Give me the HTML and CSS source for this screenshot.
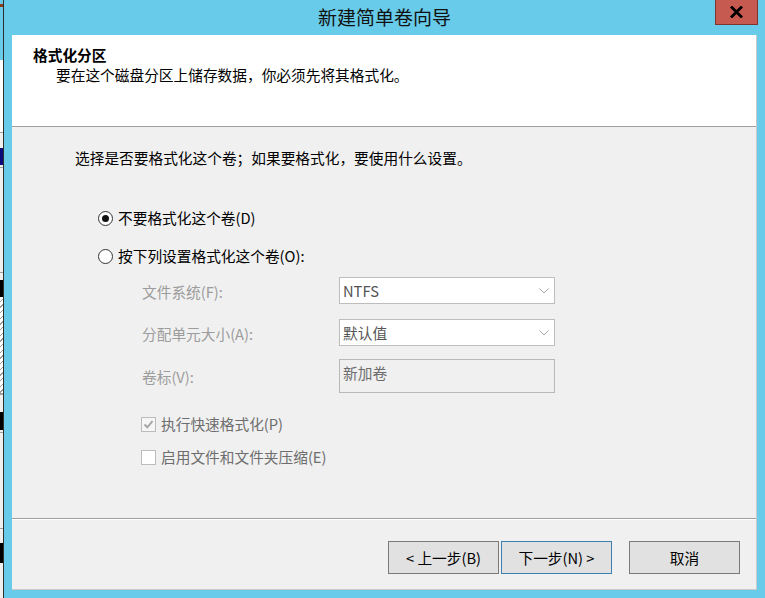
FILE: index.html
```html
<!DOCTYPE html>
<html lang="zh-CN">
<head>
<meta charset="utf-8">
<title>新建简单卷向导</title>
<link rel="stylesheet" href="styles.css">
</head>
<body>
<div class="screen">
  <div class="desk">
    <span class="d d1"></span><span class="d d2"></span><span class="d d3"></span><span class="d d4"></span>
    <span class="d d5"></span><span class="d d6"></span><span class="d d7"></span><span class="d d8"></span>
    <span class="d d9"></span><span class="d d10"></span><span class="d d11"></span><span class="d d12"></span>
    <span class="d d13"></span><span class="d d14"></span><span class="d d15"></span><span class="d d16"></span>
    <span class="d d17"></span><span class="d d18"></span><span class="d d19"></span><span class="d d20"></span>
    <span class="d d21"></span><span class="d d22"></span><span class="d d23"></span><span class="d d24"></span>
  </div>
  <div class="window">
    <div class="titlebar">
      <div class="title">新建简单卷向导</div>
      <button class="close" type="button" aria-label="关闭">
        <svg width="13" height="12" viewBox="0 0 13 12"><path d="M1 0.5 L12 11.5 M12 0.5 L1 11.5" stroke="#000" stroke-width="2.8" fill="none"/></svg>
      </button>
    </div>
    <div class="client">
      <div class="header">
        <div class="h-title">格式化分区</div>
        <div class="h-sub">要在这个磁盘分区上储存数据，你必须先将其格式化。</div>
      </div>
      <div class="body">
        <p class="intro">选择是否要格式化这个卷；如果要格式化，要使用什么设置。</p>
        <div class="radio-row first"><span class="radio checked"></span><span>不要格式化这个卷(D)</span></div>
        <div class="radio-row second"><span class="radio"></span><span>按下列设置格式化这个卷(O):</span></div>
        <div class="form">
          <div class="frow r1">
            <div class="label">文件系统(F):</div>
            <div class="select"><span>NTFS</span><svg class="chev" width="10" height="6" viewBox="0 0 10 6"><path d="M0.5 0.5 L5 5 L9.5 0.5" stroke="#a9a9a9" stroke-width="1" fill="none"/></svg></div>
          </div>
          <div class="frow r2">
            <div class="label">分配单元大小(A):</div>
            <div class="select"><span>默认值</span><svg class="chev" width="10" height="6" viewBox="0 0 10 6"><path d="M0.5 0.5 L5 5 L9.5 0.5" stroke="#a9a9a9" stroke-width="1" fill="none"/></svg></div>
          </div>
          <div class="frow r3">
            <div class="label">卷标(V):</div>
            <div class="textbox">新加卷</div>
          </div>
        </div>
        <div class="check-row c1"><span class="check checked"><svg width="13" height="13" viewBox="0 0 13 13"><path d="M2.5 6.5 L5.3 9.3 L10.5 3.2" stroke="#a6a6a6" stroke-width="2" fill="none"/></svg></span><span>执行快速格式化(P)</span></div>
        <div class="check-row c2"><span class="check"></span><span>启用文件和文件夹压缩(E)</span></div>
      </div>
      <div class="footer">
        <button class="btn" type="button">&lt; 上一步(B)</button>
        <button class="btn default" type="button">下一步(N) &gt;</button>
        <button class="btn cancel" type="button">取消</button>
      </div>
    </div>
  </div>
</div>
</body>
</html>
```
FILE: styles.css
```css
* { box-sizing: border-box; }
html, body { margin: 0; padding: 0; }
body {
  width: 765px;
  height: 598px;
  overflow: hidden;
  font-family: "Noto Sans CJK SC", "Noto Sans", sans-serif;
  font-size: 14.7px;
  line-height: 20px;
  color: #000;
}
.screen {
  display: flex;
  width: 765px;
  height: 598px;
}

/* background desktop sliver */
.desk {
  width: 3px;
  display: flex;
  flex-direction: column;
  background: #f0f0f0;
}
.d { display: block; width: 3px; flex: none; }
.d1 { height: 4px; background: #67cbe9; }
.d2 { height: 3px; background: #8b3a1a; }
.d3 { height: 53px; background: #67cbe9; }
.d4 { height: 72px; background: #ffffff; }
.d5 { height: 1px; background: #a0a0a0; }
.d6 { height: 15px; background: #f0f0f0; }
.d7 { height: 17px; background: #0a0a7a; }
.d8 { height: 2px; background: #f0f0f0; }
.d9 { height: 1px; background: #a0a0a0; }
.d10 { height: 104px; background: #f0f0f0; }
.d11 { height: 1px; background: #a0a0a0; }
.d12 { height: 7px; background: #f0f0f0; }
.d13 { height: 17px; background: #000; }
.d14 { height: 96px; background: repeating-linear-gradient(135deg, #ffffff 0 3px, #9a9a9a 3px 4px); }
.d15 { height: 2px; background: #a0a0a0; }
.d16 { height: 17px; background: #f0f0f0; }
.d17 { height: 18px; background: #000; }
.d18 { height: 2px; background: #f0f0f0; }
.d19 { height: 1px; background: #a0a0a0; }
.d20 { height: 95px; background: #f0f0f0; }
.d21 { height: 1px; background: #a0a0a0; }
.d22 { height: 14px; background: #f0f0f0; }
.d23 { height: 20px; background: #000; }
.d24 { height: 2px; background: #f0f0f0; }

/* window */
.window {
  flex: 1;
  display: flex;
  flex-direction: column;
  background: #67cbe9;
  border-left: 1px solid #2e2e2e;
}
.titlebar {
  position: relative;
  height: 35px;
  padding: 0 8px;
  display: flex;
  align-items: center;
  justify-content: center;
}
.title {
  font-size: 19px;
  line-height: 24px;
  color: #111;
  margin-top: -1px;
}
.close {
  position: absolute;
  top: 0;
  right: 7px;
  width: 43px;
  height: 25px;
  padding: 0;
  margin: 0;
  background: #c75a50;
  border: 1px solid #7e3530;
  border-top: none;
  display: flex;
  align-items: center;
  justify-content: center;
}
.close svg { margin-top: -1px; }

.client {
  flex: 1;
  margin: 0 8px 8px 8px;
  background: #f0f0f0;
  display: flex;
  flex-direction: column;
  border-right: 1px solid #c9c9c9;
  border-bottom: 1px solid #c9c9c9;
}
.header {
  height: 92px;
  background: #ffffff;
  border-bottom: 1px solid #a0a0a0;
  padding: 10px 0 0 21px;
}
.h-title { font-weight: bold; }
.h-sub { padding-left: 23px; }

.body {
  flex: 1;
  padding: 21px 0 0 63px;
}
.intro { margin: 0; }
.radio-row {
  display: flex;
  align-items: center;
  gap: 5px;
  margin-left: 23px;
}
.radio-row.first { margin-top: 40px; }
.radio-row.second { margin-top: 18px; }
.radio {
  width: 15px;
  height: 15px;
  border: 1px solid #333;
  border-radius: 50%;
  background: #fff;
  display: flex;
  align-items: center;
  justify-content: center;
}
.radio.checked::after {
  content: "";
  width: 7px;
  height: 7px;
  border-radius: 50%;
  background: #111;
}

.form {
  margin: 11px 0 0 67px;
  display: flex;
  flex-direction: column;
}
.frow { display: flex; align-items: center; }
.frow.r2 { margin-top: 15px; }
.frow.r3 { margin-top: 13px; }
.label {
  width: 197px;
  color: #9c9c9c;
  padding-top: 2px;
}
.select {
  width: 216px;
  height: 27px;
  background: #fff;
  border: 1px solid #bdbdbd;
  display: flex;
  align-items: center;
  justify-content: space-between;
  padding: 0 5px 0 3px;
  color: #555;
}
.chev { margin-top: 1px; }
.textbox {
  width: 216px;
  height: 34px;
  border: 1px solid #b9b9b9;
  background: #f0f0f0;
  color: #6d6d6d;
  padding: 3px 0 0 3px;
}

.check-row {
  display: flex;
  align-items: center;
  gap: 5px;
  margin-left: 66px;
  color: #6d6d6d;
}
.check-row.c1 { margin-top: 21px; }
.check-row.c2 { margin-top: 13px; }
.check {
  width: 15px;
  height: 15px;
  border: 1px solid #bcbcbc;
  background: #fff;
  display: flex;
  align-items: center;
  justify-content: center;
}
.check.checked { background: #f6f6f6; }

.footer {
  height: 71px;
  border-top: 1px solid #a0a0a0;
  box-shadow: inset 0 1px 0 #ffffff;
  display: flex;
  justify-content: flex-end;
  align-items: flex-start;
  padding: 22px 16px 0 0;
  gap: 2px;
}
.btn {
  width: 111px;
  height: 33px;
  margin: 0;
  padding: 0;
  background: #e1e1e1;
  border: 1px solid #7a7a7a;
  font-family: "Noto Sans CJK SC", "Noto Sans", sans-serif;
  font-size: 14.7px;
  line-height: 20px;
  color: #000;
}
.btn.default { border-color: #3c7fb1; }
.btn.cancel { margin-left: 15px; }
```
